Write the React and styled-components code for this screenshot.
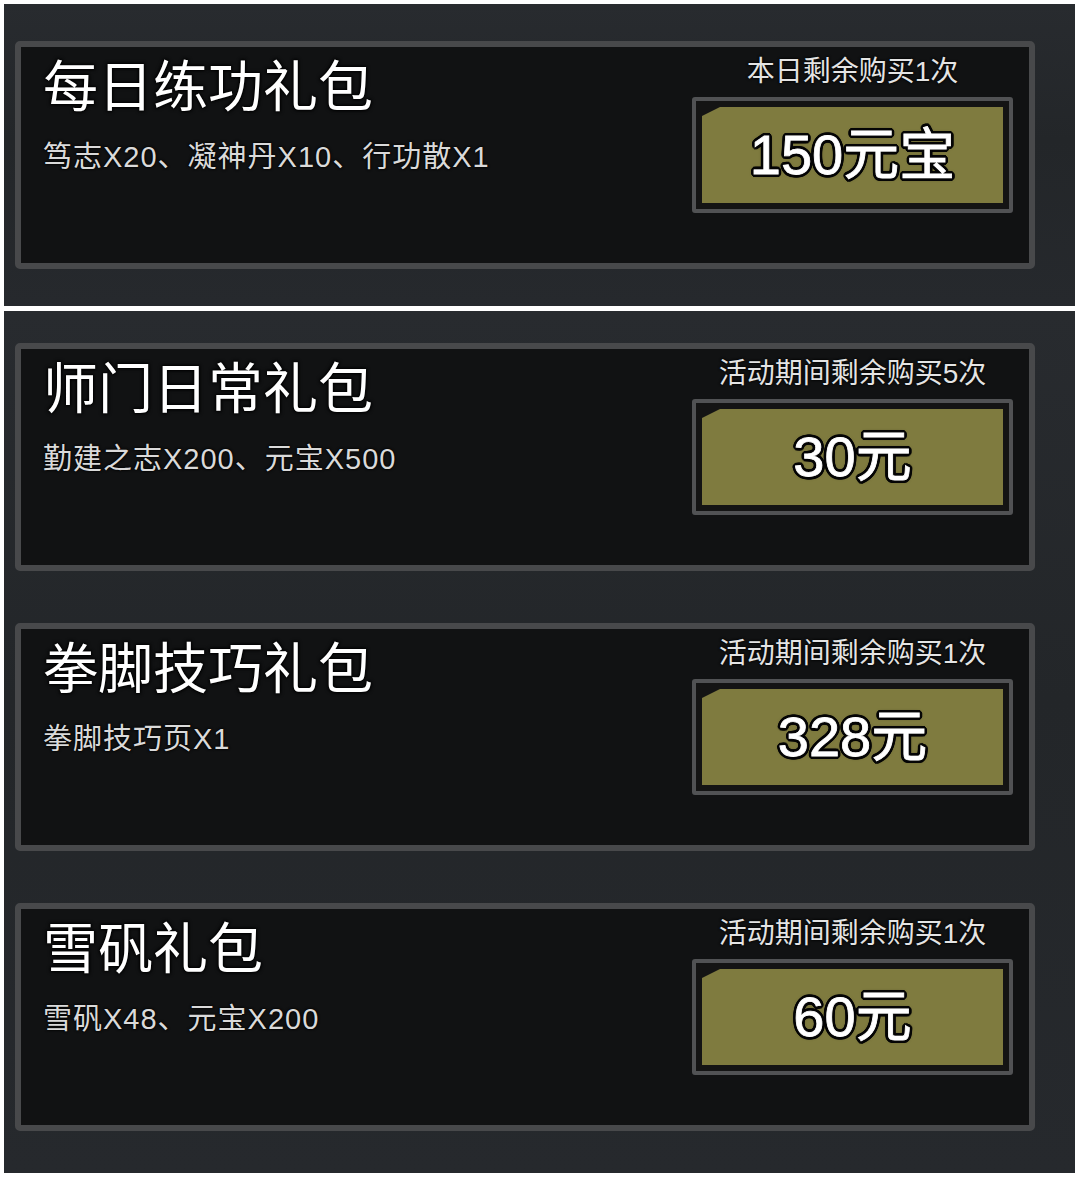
import styled, { createGlobalStyle } from "styled-components"

const GlobalStyle = createGlobalStyle`
  html, body {
    margin: 0;
    padding: 0;
    background: #ffffff;
  }
  body {
    font-family: "Liberation Sans", "Noto Sans CJK SC", sans-serif;
  }
`

// thick black ring round the price text
const ring = (r) => {
  const out = []
  for (let i = 0; i < 16; i++) {
    const a = (Math.PI * 2 * i) / 16
    out.push(`${(Math.cos(a) * r).toFixed(2)}px ${(Math.sin(a) * r).toFixed(2)}px 0 #050505`)
  }
  return out.join(", ")
}

const Page = styled.div`
  display: flex;
  flex-direction: column;
  gap: 5px;
  padding: 4px 5px 5px 4px;
`

const Panel = styled.section`
  display: flex;
  flex-direction: column;
  gap: 52px;
  padding: ${(p) => (p.$first ? "37px 40px 37px 11px" : "32px 40px 42px 11px")};
  background: linear-gradient(180deg, #282b2f 0%, #232629 45%, #26292d 100%);
`

const Card = styled.div`
  box-sizing: border-box;
  height: 228px;
  display: flex;
  justify-content: space-between;
  border: 6px solid #48494b;
  border-radius: 5px;
  background: #111213;
  padding: 0 16px 0 22px;
`

const Info = styled.div`
  display: flex;
  flex-direction: column;
  gap: 28px;
  padding-top: 5px;
`

const Title = styled.h2`
  margin: 0;
  font-family: "Noto Sans CJK SC", sans-serif;
  font-weight: 400;
  font-size: 55px;
  line-height: 60px;
  color: #ffffff;
  text-shadow: 0 0 2px #000, 0 0 3px #000, 0 0 4px #000;
`

const Items = styled.p`
  margin: 0;
  font-family: "Liberation Sans", "Noto Sans CJK SC", sans-serif;
  font-size: 29px;
  line-height: 34px;
  letter-spacing: 1px;
  color: #dadada;
  text-shadow: 0 0 2px #000, 0 0 3px #000;
`

const Buy = styled.div`
  width: 321px;
  display: flex;
  flex-direction: column;
  align-items: center;
  gap: 8px;
  padding-top: 8px;
`

const Limit = styled.div`
  font-family: "Liberation Sans", "Noto Sans CJK SC", sans-serif;
  font-size: 28px;
  line-height: 34px;
  color: #e4e4e4;
  text-shadow: 0 0 2px #000, 0 0 3px #000;
  white-space: nowrap;
`

const PriceFrame = styled.button`
  box-sizing: border-box;
  width: 321px;
  height: 116px;
  padding: 6px;
  border: 4px solid #515254;
  border-radius: 3px;
  background: #141414;
  cursor: pointer;
`

const PriceFace = styled.div`
  height: 100%;
  display: flex;
  align-items: center;
  justify-content: center;
  background: #7f7b3f;
  clip-path: polygon(18px 0, 100% 0, 100% 100%, 0 100%, 0 9px);
  font-family: "Liberation Sans", "Noto Sans CJK SC", sans-serif;
  font-size: 56px;
  line-height: 1;
  color: #ffffff;
  -webkit-text-stroke: 0.8px #ffffff;
  text-shadow: ${ring(3)}, 0 0 4px #000;
`

const packs = [
  { name: "每日练功礼包", items: "笃志X20、凝神丹X10、行功散X1", limit: "本日剩余购买1次", price: "150元宝" },
  { name: "师门日常礼包", items: "勤建之志X200、元宝X500", limit: "活动期间剩余购买5次", price: "30元" },
  { name: "拳脚技巧礼包", items: "拳脚技巧页X1", limit: "活动期间剩余购买1次", price: "328元" },
  { name: "雪矾礼包", items: "雪矾X48、元宝X200", limit: "活动期间剩余购买1次", price: "60元" },
]

const Pack = ({ pack }) => (
  <Card>
    <Info>
      <Title>{pack.name}</Title>
      <Items>{pack.items}</Items>
    </Info>
    <Buy>
      <Limit>{pack.limit}</Limit>
      <PriceFrame>
        <PriceFace>{pack.price}</PriceFace>
      </PriceFrame>
    </Buy>
  </Card>
)

const App = () => {
  return (
    <>
      <GlobalStyle />
      <Page>
        <Panel $first>
          <Pack pack={packs[0]} />
        </Panel>
        <Panel>
          {packs.slice(1).map((p) => (
            <Pack key={p.name} pack={p} />
          ))}
        </Panel>
      </Page>
    </>
  )
}

export default App
